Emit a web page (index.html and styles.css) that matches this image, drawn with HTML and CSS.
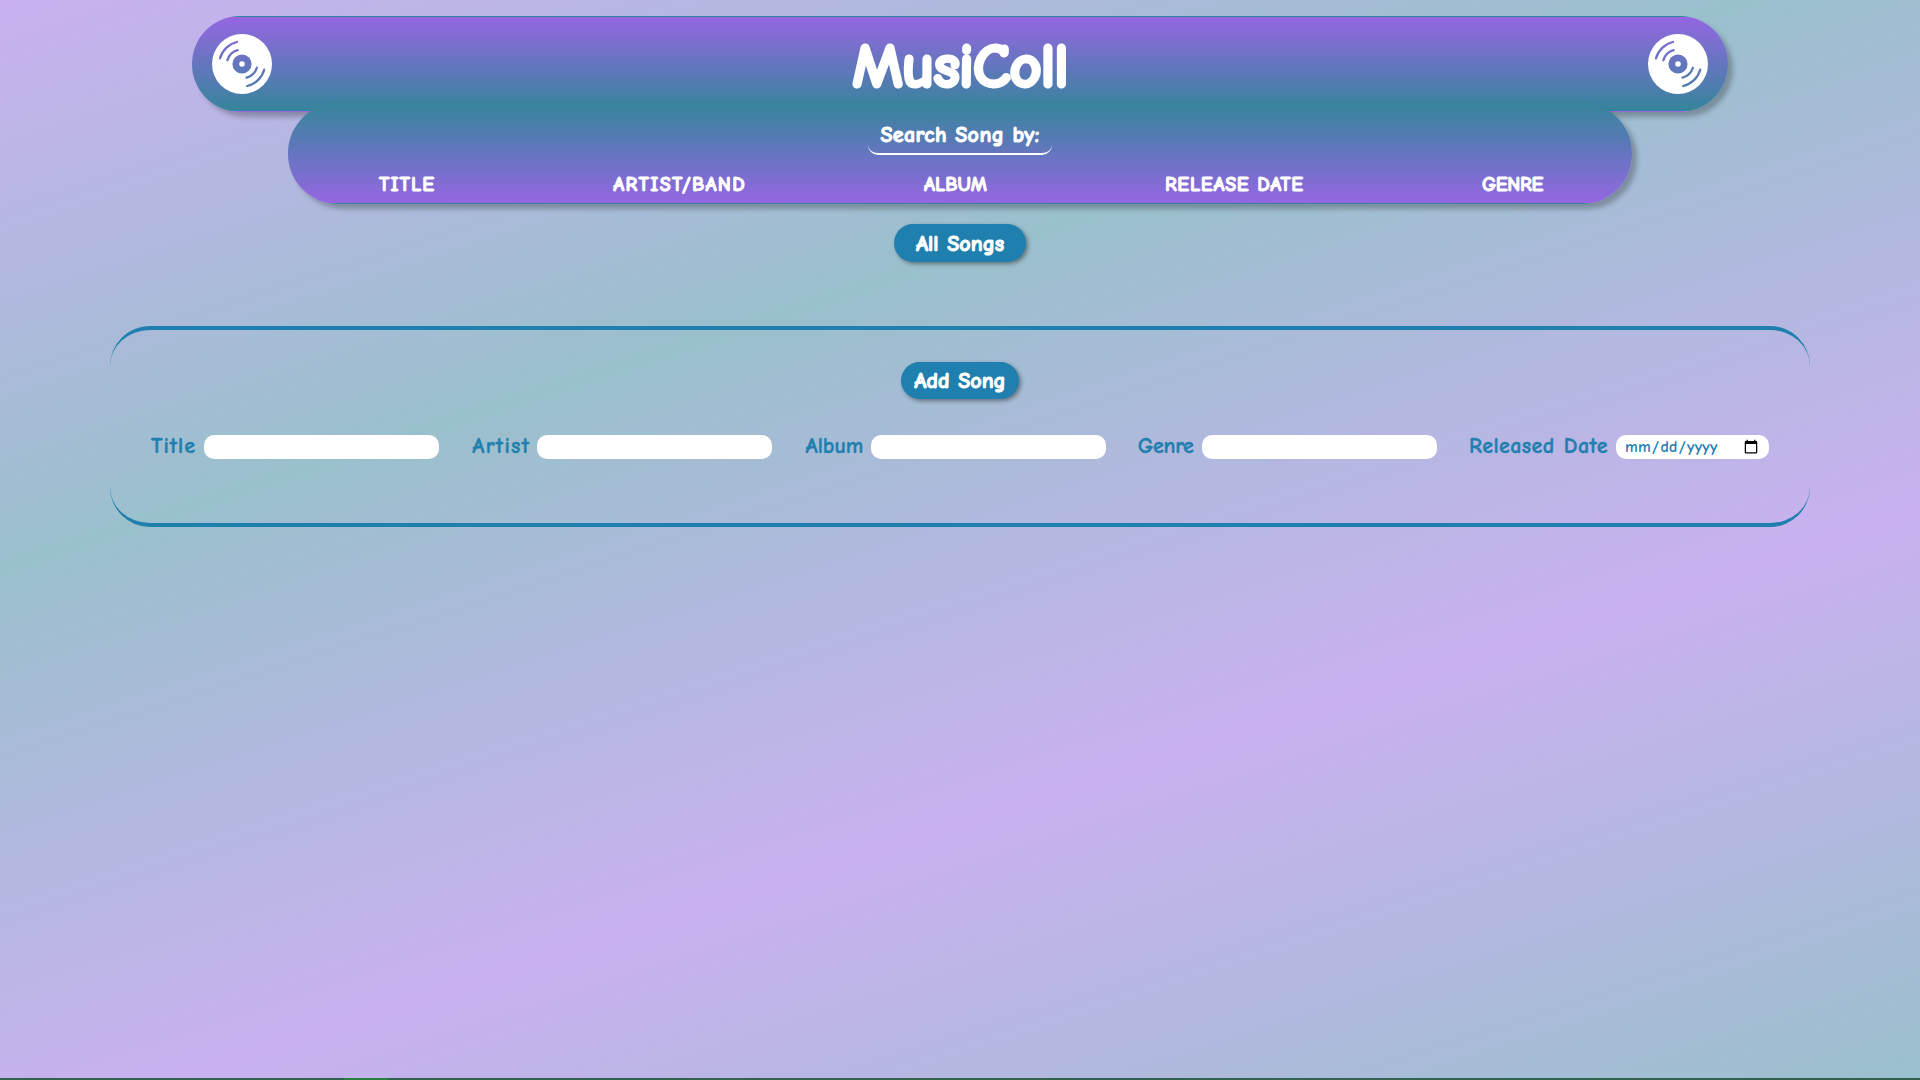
FILE: index.html
```html
<!DOCTYPE html>
<html lang="en">
<head>
<meta charset="utf-8">
<title>MusiColl</title>
<link rel="stylesheet" href="styles.css">
</head>
<body>
<svg class="sprite" width="0" height="0" aria-hidden="true">
  <symbol id="disc" viewBox="0 0 60 60">
    <mask id="cut">
      <rect width="60" height="60" fill="#fff"/>
      <circle cx="30" cy="30" r="9.6" fill="#000"/>
      <circle cx="30" cy="30" r="2.8" fill="#fff"/>
      <g fill="none" stroke="#000" stroke-width="2.3" stroke-linecap="round">
        <path d="M8 24.3A23 23 0 0 1 25 8"/>
        <path d="M15.4 26.2A15 15 0 0 1 25.6 16.2"/>
        <path d="M52.2 35.7A23 23 0 0 1 35.2 52"/>
        <path d="M44.8 33.8A15 15 0 0 1 34.6 43.6"/>
      </g>
    </mask>
    <circle cx="30" cy="30" r="30" fill="#fff" mask="url(#cut)"/>
  </symbol>
</svg>
<div class="page">
  <header class="header">
    <svg class="disc"><use href="#disc"/></svg>
    <h1 class="brand">MusiColl</h1>
    <svg class="disc"><use href="#disc"/></svg>
  </header>
  <nav class="search">
    <h2 class="search-title"><span>Search Song by:</span></h2>
    <ul class="links">
      <li class="l-title">TITLE</li>
      <li class="l-artist">ARTIST/BAND</li>
      <li class="l-album">ALBUM</li>
      <li class="l-date">RELEASE DATE</li>
      <li class="l-genre">GENRE</li>
    </ul>
  </nav>
  <button class="button all">All Songs</button>
  <form class="add-form">
    <button class="button add" type="button">Add Song</button>
    <div class="fields">
      <label class="field"><span class="f-title">Title</span><input type="text"></label>
      <label class="field"><span class="f-artist">Artist</span><input type="text"></label>
      <label class="field"><span class="f-album">Album</span><input type="text"></label>
      <label class="field"><span class="f-genre">Genre</span><input type="text"></label>
      <label class="field"><span class="f-date">Released Date</span><input class="date" type="date"></label>
    </div>
  </form>
  <footer class="strip"><div class="strip-mark"></div></footer>
</div>
</body>
</html>
```
FILE: styles.css
```css
* { box-sizing: border-box; }
body {
  margin: 0;
  font-family: "Comic Sans MS", "Comic Neue", "Noto Sans", sans-serif;
  font-size: 20px;
}
.sprite { position: absolute; }
.page {
  height: 1080px;
  padding-top: 16px;
  display: flex;
  flex-direction: column;
  align-items: center;
  overflow: hidden;
  background: linear-gradient(162deg, #c9b1f0, #9ac0cd, #c9b1f0, #9ac0cd);
}
.header {
  flex: none;
  width: 80%;
  height: 96px;
  padding: 0 19px;
  display: flex;
  align-items: center;
  justify-content: space-between;
  border: 1px solid transparent;
  border-radius: 50px;
  background: linear-gradient(#9566e2, #35859b);
  box-shadow: 5px 5px 5px rgba(0, 0, 0, 0.25);
}
.disc { width: 60px; height: 60px; }
.brand {
  margin: 5px 0 0;
  color: #fff;
  font-size: 63px;
  line-height: 90px;
  letter-spacing: -1.3px;
  -webkit-text-stroke: 3px #fff;
}
.search {
  flex: none;
  width: 70%;
  height: 101px;
  margin-top: -9px;
  display: flex;
  flex-direction: column;
  align-items: center;
  border: 1px solid transparent;
  border-top: 0;
  border-radius: 50px;
  background: linear-gradient(#35859b, #9566e2);
  box-shadow: 5px 5px 5px rgba(0, 0, 0, 0.25);
  color: #fff;
}
.search-title {
  width: 184px;
  height: 36px;
  margin: 16px 0 0;
  border-bottom: 2px solid #fff;
  border-radius: 10px;
  font-size: 22px;
  line-height: 33px;
  text-align: center;
  white-space: nowrap;
  letter-spacing: 0.4px;
  -webkit-text-stroke: 1px #fff;
}
.links {
  width: 100%;
  margin: 14px 0 0;
  padding: 0 88px 0 90px;
  display: flex;
  justify-content: space-between;
  list-style: none;
  font-weight: 700;
  line-height: 31px;
  white-space: nowrap;
  -webkit-text-stroke: 1px #fff;
}
.l-title { letter-spacing: 1px; }
.l-artist { letter-spacing: 1.3px; }
.l-date { letter-spacing: 0.7px; }
.l-genre { letter-spacing: -0.3px; }
.button {
  flex: none;
  height: 38px;
  padding: 2px 0 0;
  border: 0;
  border-radius: 20px;
  background: #1f7fae;
  box-shadow: 2px 2px 4px rgba(0, 0, 0, 0.4);
  color: #fff;
  font: 700 22px/36px "Comic Sans MS", "Comic Neue", "Noto Sans", sans-serif;
  word-spacing: 1px;
  white-space: nowrap;
  -webkit-text-stroke: 1px #fff;
}
.all { width: 132px; margin-top: 20px; }
.add-form {
  flex: none;
  width: 1700px;
  height: 201px;
  margin-top: 64px;
  padding: 32px 41px 0;
  border: solid #1f7fae;
  border-width: 4px 0;
  border-radius: 40px;
  text-align: center;
}
.add {
  display: block;
  width: 118px;
  height: 37px;
  margin: 0 auto;
  padding-top: 0;
}
.fields {
  margin-top: 36px;
  display: flex;
  justify-content: space-between;
  color: #1f7fae;
  font-size: 22px;
  font-weight: 600;
}
.field {
  display: flex;
  height: 24px;
  line-height: 23px;
  text-align: left;
  white-space: nowrap;
}
.field span { -webkit-text-stroke: 0.4px #1f7fae; }
.f-title { width: 53px; letter-spacing: 1px; }
.f-artist { width: 66px; letter-spacing: 1.3px; }
.f-album { width: 66px; letter-spacing: 0; }
.f-genre { width: 64px; letter-spacing: -0.3px; }
.f-date { width: 147px; letter-spacing: 0.4px; word-spacing: 1px; }
.f-artist, .f-album { padding-left: 1px; }
.field input {
  width: 235px;
  height: 24px;
  padding: 1px 8px;
  border: 0;
  border-radius: 10px;
  background: #fff;
  color: #1f7fae;
  font: 600 16px "Comic Sans MS", "Comic Neue", "Noto Sans", sans-serif;
}
.field .date { width: 153px; letter-spacing: 0.3px; }
.strip {
  flex: none;
  width: 100%;
  height: 2px;
  margin-top: auto;
  padding-left: 344px;
  background: #33614f;
}
.strip-mark { width: 44px; height: 2px; background: #27823f; }
```
